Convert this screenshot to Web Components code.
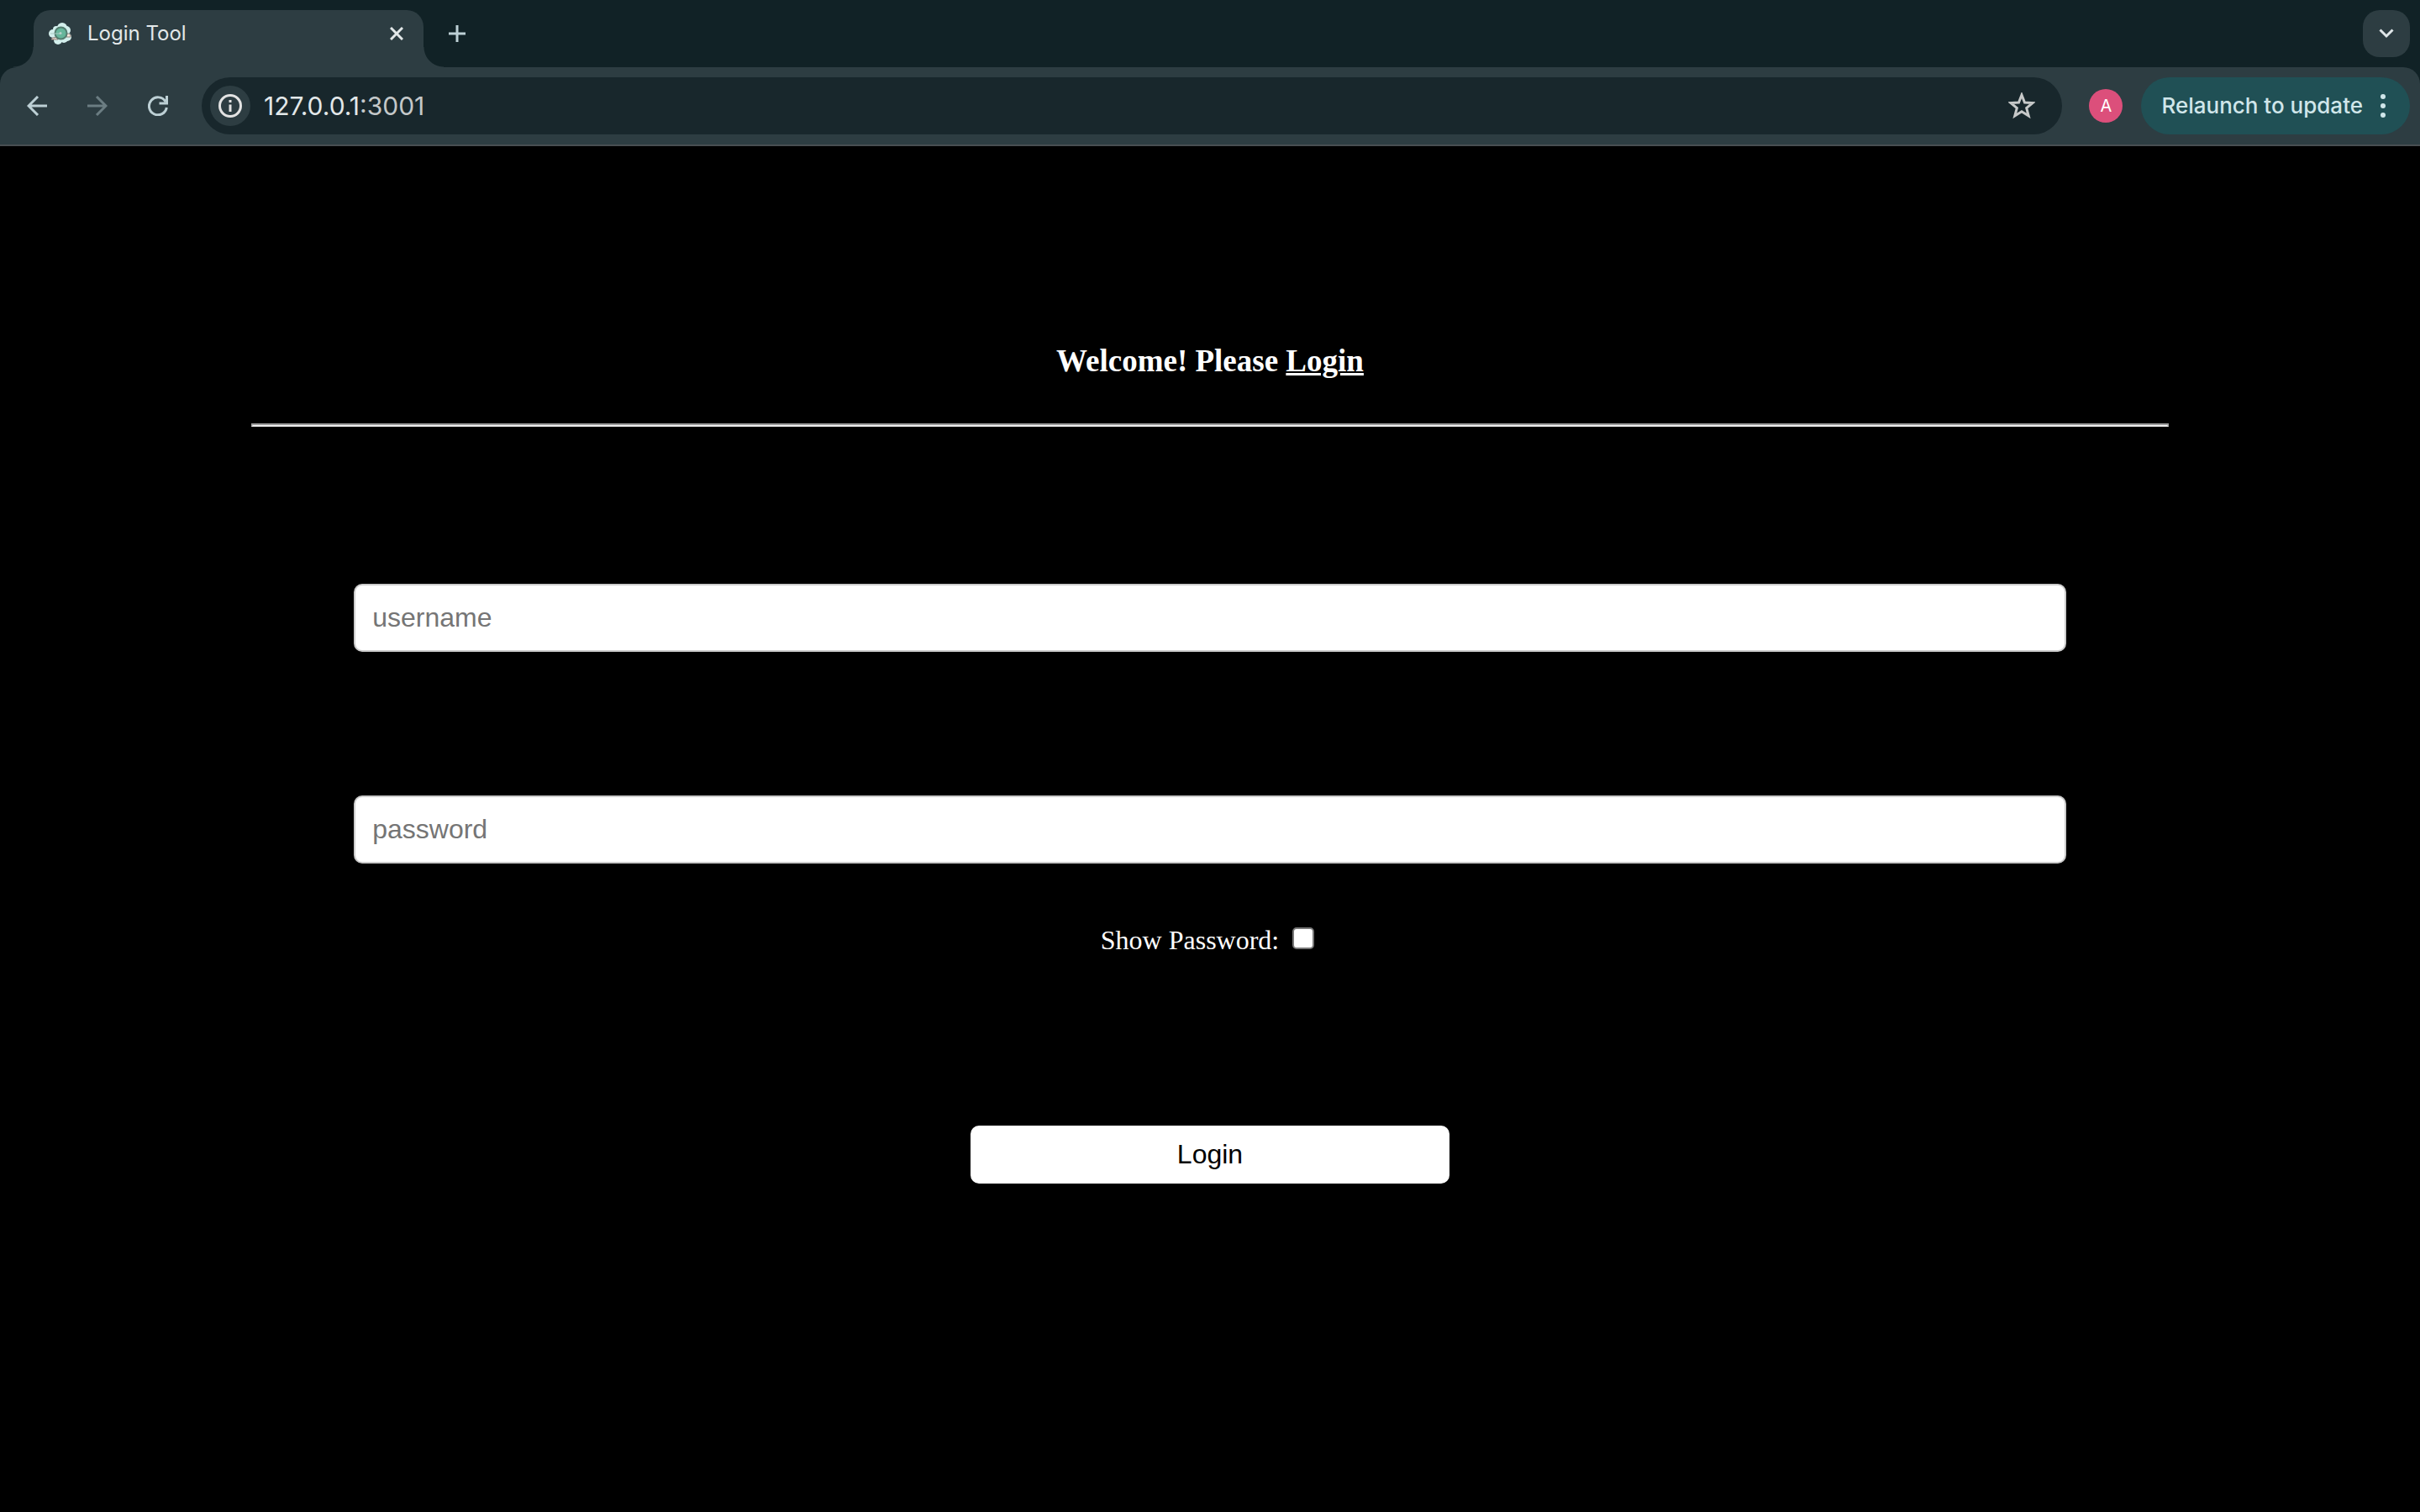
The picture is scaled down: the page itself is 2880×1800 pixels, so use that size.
<!DOCTYPE html>
<html lang="en">
<head>
<meta charset="utf-8">
<title>Login Tool</title>
<style>
  html, body { margin: 0; min-height: 100%; background: #000; }
  body { font-family: "Liberation Serif", serif; }
</style>
</head>
<body>
<browser-window>
  <tab-strip slot="tabs"><browser-tab>Login Tool</browser-tab></tab-strip>
  <tool-bar slot="toolbar">
    <address-bar host="127.0.0.1" port=":3001"></address-bar>
    <profile-avatar>A</profile-avatar>
    <update-button>Relaunch to update</update-button>
  </tool-bar>
  <login-page></login-page>
</browser-window>

<script>
const base = `
  :host, *, *::before, *::after, :host::before, :host::after { box-sizing: border-box; }
  button { font: inherit; color: inherit; border: 0; padding: 0; margin: 0; background: none; }
  svg { display: block; flex: none; }
`;

function define(name, markup) {
  const template = document.createElement("template");
  customElements.define(name, class extends HTMLElement {
    constructor() {
      super();
      template.innerHTML = `<style>${base}</style>` + markup(this);
      this.attachShadow({ mode: "open" }).append(template.content.cloneNode(true));
    }
  });
}

define("browser-window", () => `
  <style>
    :host { display: flex; flex-direction: column; min-height: 100vh; --strip: #112226; --bar: #2d3d42; --field: #18272c; }
    header { display: flex; flex-direction: column; font-family: Inter, sans-serif; background: var(--strip); }
    main { flex: 1; background: #000; color: #fff; }
  </style>
  <header><slot name="tabs"></slot><slot name="toolbar"></slot></header>
  <main><slot></slot></main>
`);

define("tab-strip", () => `
  <style>
    :host { display: flex; align-items: center; height: 80px; padding: 0 12px 0 40px; background: var(--strip); }
    .new { display: grid; place-items: center; width: 56px; height: 56px; margin-left: 12px; }
    .search { display: grid; place-items: center; width: 56px; height: 56px; margin-left: auto; border-radius: 20px; background: var(--bar); }
  </style>
  <slot></slot>
  <button class="new" aria-label="New tab">
    <svg width="20" height="20" viewBox="0 0 20 20" stroke="#bdd0d5" stroke-width="3"><path d="M10 0v20M0 10h20"/></svg>
  </button>
  <button class="search" aria-label="Search tabs">
    <svg width="18" height="12" viewBox="0 0 18 12" fill="none" stroke="#dfe6e8" stroke-width="3"><path d="M1.500 1.500 9 9l7.500-7.500"/></svg>
  </button>
`);

define("browser-tab", () => `
  <style>
    :host { position: relative; display: flex; align-items: center; align-self: flex-end; width: 464px; height: 68px; padding: 0 24px 12px 18px;
      border-radius: 20px 20px 0 0; background: var(--bar); color: #e3e8e9; font-size: 24px; line-height: 32px; }
    :host::before, :host::after { content: ""; position: absolute; bottom: 0; width: 24px; height: 24px; }
    :host::before { right: 100%; background: radial-gradient(circle at 0 0, transparent 23px, var(--bar) 24px); }
    :host::after { left: 100%; background: radial-gradient(circle at 100% 0, transparent 23px, var(--bar) 24px); }
    .title { flex: 1; padding-left: 18px; }
  </style>
  <svg width="28" height="28" viewBox="0 0 28 28" aria-hidden="true">
    <g fill="#d3efec"><circle cx="16" cy="7" r="6"/><circle cx="9" cy="9" r="4"/><circle cx="5" cy="14" r="5"/><circle cx="21" cy="10" r="5"/><circle cx="22" cy="18" r="5"/><circle cx="18" cy="20" r="5"/><circle cx="11" cy="22" r="5"/></g>
    <path fill="#f8e7dc" stroke="#8f817b" stroke-width="1" d="M3 21q1-3 4-2 2-2 4 2zM21 16q2-4 5 0v2h-5z"/>
    <circle cx="14.500" cy="13.500" r="7" fill="#67b69b" stroke="#547e70" stroke-width="2"/>
    <path stroke="#a8c9c0" stroke-width="1" d="M2 14h12"/><circle cx="14" cy="13.500" r="1.500" fill="#b8d1ca"/>
  </svg>
  <span class="title"><slot></slot></span>
  <button aria-label="Close tab">
    <svg width="16" height="16" viewBox="0 0 16 16" stroke="#e3e8e9" stroke-width="3"><path d="m1 1 14 14M15 1 1 15"/></svg>
  </button>
`);

define("tool-bar", () => `
  <style>
    :host { display: flex; align-items: center; height: 94px; padding: 0 12px 0 32px; border-bottom: 2px solid #484f52; border-radius: 20px 20px 0 0; background: var(--bar); color: #bdd0d5; }
    nav { display: flex; gap: 48px; margin-right: 40px; }
    .off { color: #6b7d82; }
  </style>
  <nav>
    <button aria-label="Back"><svg width="24" height="24" viewBox="0 0 24 24" fill="none" stroke="currentColor" stroke-width="3"><path d="M24 12H2M13 1 2 12l11 11"/></svg></button>
    <button class="off" aria-label="Forward"><svg width="24" height="24" viewBox="0 0 24 24" fill="none" stroke="currentColor" stroke-width="3"><path d="M0 12h22M11 1l11 11-11 11"/></svg></button>
    <button aria-label="Reload"><svg width="24" height="24" viewBox="0 0 24 24" fill="none" stroke="currentColor" stroke-width="3"><path d="M22.500 0v9h-9M21 7A10.500 10.500 0 1 0 22.300 14"/></svg></button>
  </nav>
  <slot></slot>
`);

define("address-bar", host => `
  <style>
    :host { display: flex; flex: 1; align-items: center; height: 68px; margin-right: 32px; padding: 0 32px 0 10px; border-radius: 34px; background: var(--field); font-size: 30px; line-height: 36px; color: #e3e8e9; }
    .info { display: grid; place-items: center; width: 48px; height: 48px; margin-right: 16px; border-radius: 50%; background: var(--bar); }
    .url { flex: 1; }
    .port { color: #c4c8c9; }
  </style>
  <button class="info" aria-label="View site information">
    <svg width="28" height="28" viewBox="0 0 28 28"><circle cx="14" cy="14" r="12.500" fill="none" stroke="#e3e3e3" stroke-width="3"/><path stroke="#e3e3e3" stroke-width="3" d="M14 12.500V21M14 7v3"/></svg>
  </button>
  <span class="url"><span>${host.getAttribute("host")}</span><span class="port">${host.getAttribute("port")}</span></span>
  <button aria-label="Bookmark this tab">
    <svg width="32" height="32" viewBox="0 0 32 32" fill="none" stroke="#c7c9c9" stroke-width="3"><path d="m16 3 3.500 9 9.500.6-7.300 6 2.500 9.400L16 22.800 7.800 28l2.500-9.400-7.300-6 9.500-.6z"/></svg>
  </button>
`);

define("profile-avatar", () => `
  <style>
    button { display: grid; place-items: center; width: 40px; height: 40px; margin-right: 22px; border-radius: 50%; background: #dc4f7b; color: #fff; font-size: 20px; line-height: 24px; }
  </style>
  <button><slot></slot></button>
`);

define("update-button", () => `
  <style>
    button { display: flex; align-items: center; gap: 20px; height: 68px; padding: 0 28px 0 24px; border-radius: 34px; background: #205055; color: #d0e6ea; font-size: 26px; font-weight: 500; line-height: 32px; }
  </style>
  <button><slot></slot><svg width="8" height="28" viewBox="0 0 8 28" fill="currentColor" aria-hidden="true"><circle cx="4" cy="3" r="3"/><circle cx="4" cy="14" r="3"/><circle cx="4" cy="25" r="3"/></svg></button>
`);

define("login-page", () => `
  <style>
    :host { display: block; padding: 232px 16px 0; font-size: 32px; line-height: 36px; }
    form { display: flex; flex-direction: column; align-items: center; }
    h1 { margin: 0; font-size: 37px; line-height: 48px; }
    u { text-decoration-thickness: 3px; }
    hr { box-sizing: content-box; width: 80%; height: 0; margin: 50px 0 0; border: 2px solid #9a9a9a; border-bottom-color: #eee; }
    text-field { width: calc(70% + 44px); }
    .user { margin-top: 187px; }
    .pass { margin-top: 171px; }
    .show { display: flex; align-items: baseline; gap: 16px; margin-top: 73px; padding-right: 6px; }
    input { appearance: none; width: 26px; height: 26px; margin: 0; border: 2px solid #767676; border-radius: 5px; background: #fff; }
    input:checked { background: #0075ff; }
    .login { width: 20%; height: 69px; margin-top: 203px; padding-bottom: 2px; border-radius: 10px; background: #fff; color: #000; font: 32px/36px "Liberation Sans", sans-serif; }
  </style>
  <form>
    <h1>Welcome! Please <u>Login</u></h1>
    <hr>
    <text-field class="user" kind="text" label="username"></text-field>
    <text-field class="pass" kind="password" label="password"></text-field>
    <label class="show">Show Password: <input type="checkbox"></label>
    <button class="login" type="button">Login</button>
  </form>
`);

define("text-field", host => `
  <style>
    :host { display: block; }
    input { display: block; width: 100%; height: 81px; padding: 0 20px; border: 2px solid #ccc; border-radius: 10px; background: #fff; color: #000; font: 32px/36px "Liberation Sans", sans-serif; }
    input::placeholder { color: #757575; opacity: 1; }
  </style>
  <input type="${host.getAttribute("kind")}" placeholder="${host.getAttribute("label")}" aria-label="${host.getAttribute("label")}">
`);

const page = document.querySelector("login-page").shadowRoot;
page.querySelector(".show input").addEventListener("change", event => {
  page.querySelector(".pass").shadowRoot.querySelector("input").type = event.target.checked ? "text" : "password";
});
</script>
</body>
</html>
